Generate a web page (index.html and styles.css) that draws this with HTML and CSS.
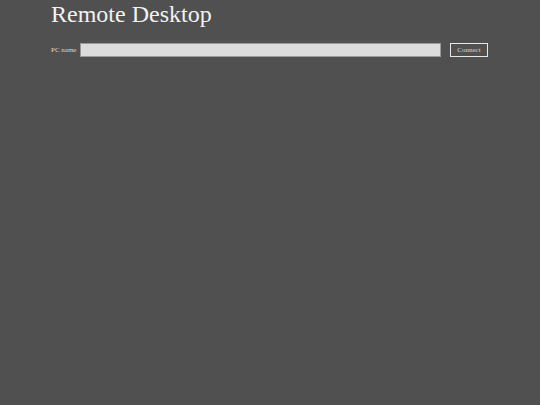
FILE: index.html
```html
<!DOCTYPE html>
<html>
<head>
<meta charset="utf-8">
<title>Remote Desktop</title>
<link rel="stylesheet" href="styles.css">
</head>
<body>
<div class="page">
  <h1 class="title">Remote Desktop</h1>
  <form class="connect-form">
    <label class="label" for="pc">PC name</label>
    <input class="pc-input" id="pc" type="text">
    <button class="connect-btn" type="button">Connect</button>
  </form>
</div>
</body>
</html>
```
FILE: styles.css
```css
html, body {
  margin: 0;
  padding: 0;
  background: #505050;
  height: 100%;
}
body {
  font-family: "Liberation Serif", "Times New Roman", serif;
  color: #e8e8e8;
}
.page {
  padding: 0 52px 0 51px;
}
.title {
  margin: 0;
  font-size: 24px;
  font-weight: normal;
  line-height: 28px;
  color: #f2f2f2;
}
.connect-form {
  margin-top: 15px;
  display: flex;
  align-items: center;
  height: 14px;
}
.label {
  font-size: 7px;
  color: #d8d8d8;
  margin-right: 4px;
  white-space: nowrap;
}
.pc-input {
  flex: 1;
  box-sizing: border-box;
  height: 14px;
  margin: 0;
  padding: 0 2px;
  border: 1px solid #9a9a9a;
  background: #dcdcdc;
  font-size: 7px;
}
.connect-btn {
  margin: 0 0 0 9px;
  box-sizing: border-box;
  height: 14px;
  width: 38px;
  padding: 0;
  border: 1px solid #e6e6e6;
  background: #505050;
  color: #d8d8d8;
  font-family: "Liberation Serif", "Times New Roman", serif;
  font-size: 7px;
}
```
